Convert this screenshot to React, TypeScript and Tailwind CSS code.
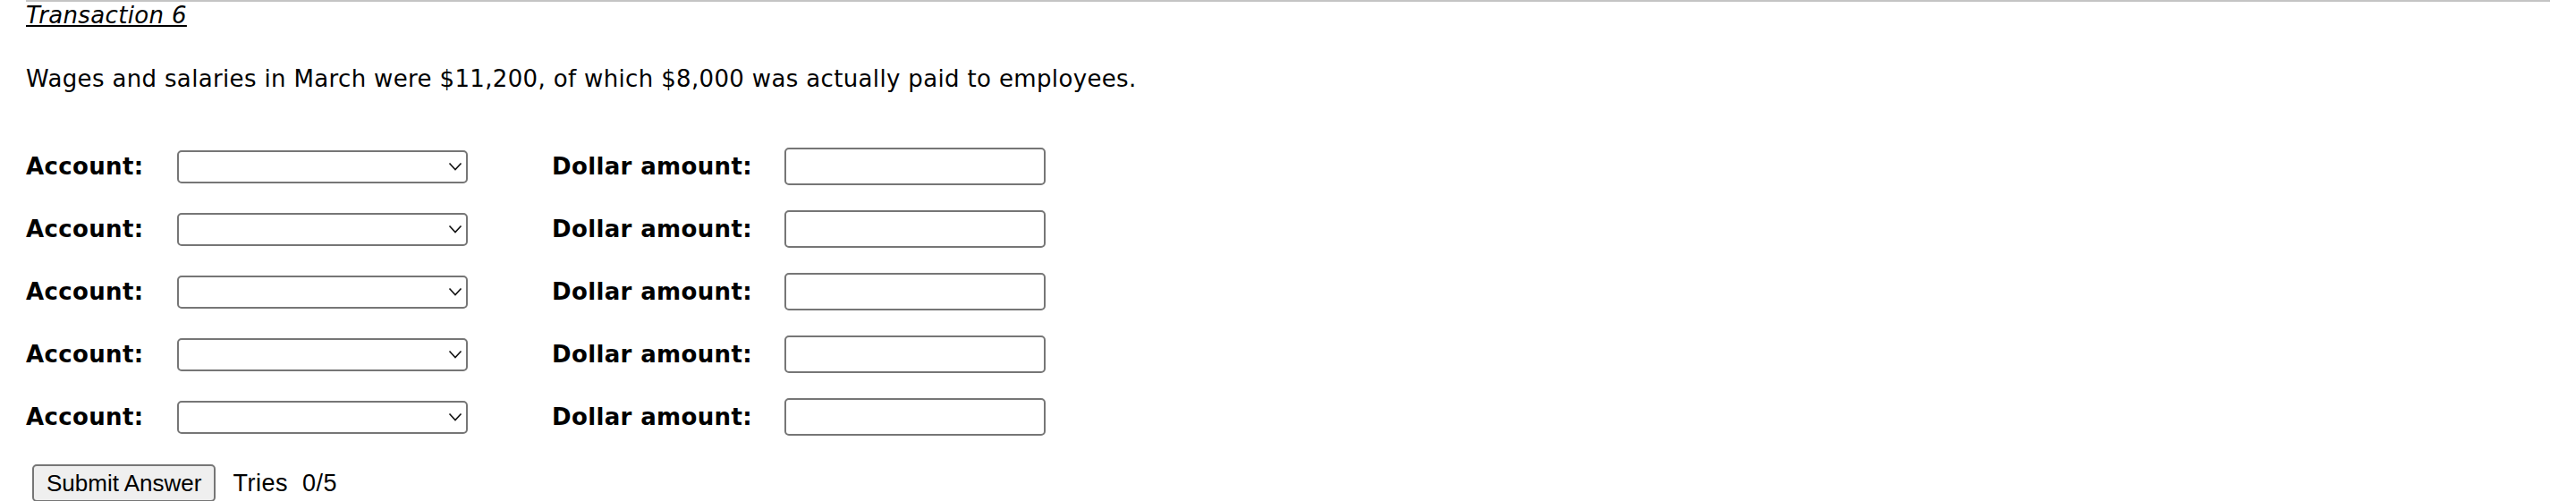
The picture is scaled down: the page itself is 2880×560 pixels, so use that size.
import React from "react";

const ROWS = [0, 1, 2, 3, 4];

function Chevron() {
  return (
    <svg
      width="16"
      height="10"
      viewBox="0 0 16 10"
      className="pointer-events-none absolute right-[6px] top-1/2 -translate-y-1/2"
    >
      <polyline points="1.5,1.5 8,8.5 14.5,1.5" fill="none" stroke="#111" strokeWidth="1.6" />
    </svg>
  );
}

function EntryRow() {
  return (
    <div className="flex h-[70px] items-center">
      <div className="w-[169px] font-bold">Account:</div>
      <div className="relative">
        <select className="block h-[37px] w-[325px] appearance-none rounded-[5px] border-2 border-[#767676] bg-white" />
        <Chevron />
      </div>
      <div className="ml-[94px] w-[260px] font-bold">Dollar amount:</div>
      <input
        type="text"
        className="h-[42px] w-[292px] rounded-[5px] border-2 border-[#767676] bg-white px-2 outline-none"
      />
    </div>
  );
}

export default function App() {
  return (
    <div className="min-h-[560px] bg-white px-[29px] text-black">
      <div
        className="border-t-2 border-[#c4c4c4] text-[26px] leading-[30px] tracking-[0.35px]"
        style={{ fontFamily: '"DejaVu Sans", Verdana, sans-serif' }}
      >
        <div>
          <span className="italic underline">Transaction 6</span>
        </div>
        <p className="mt-[41px]">
          Wages and salaries in March were $11,200, of which $8,000 was actually paid to employees.
        </p>
        <div className="mt-[48px]">
          {ROWS.map((r) => (
            <EntryRow key={r} />
          ))}
        </div>
      </div>
      <div
        className="mt-[18px] flex items-center"
        style={{ fontFamily: '"Liberation Sans", Arial, sans-serif' }}
      >
        <button className="ml-[7px] h-[42px] rounded-[5px] border-2 border-[#767676] bg-[#efefef] px-[14px] text-[26px] leading-none">
          Submit Answer
        </button>
        <span className="ml-[19px] text-[27px] tracking-[0.5px]">Tries&nbsp; 0/5</span>
      </div>
    </div>
  );
}
